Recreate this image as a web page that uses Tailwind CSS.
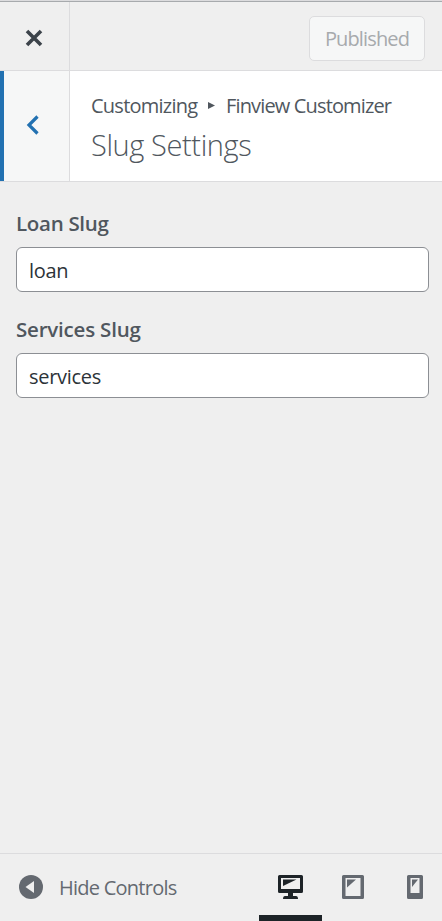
<!DOCTYPE html>
<html lang="en">
<head>
<meta charset="utf-8">
<title>Customize: Slug Settings</title>
<script src="https://cdn.jsdelivr.net/npm/@tailwindcss/browser@4"></script>
</head>
<body class="h-[921px] w-[442px] overflow-hidden bg-[#efefef] font-['Open_Sans','Noto_Sans',sans-serif] text-[20px] text-[#50575e]">
<div class="flex h-full flex-col">
  <header class="flex h-[71px] shrink-0 border-b border-[#dcdcde]">
    <div class="flex w-full border-t border-[#dcdcde]">
      <div class="flex w-full border-t border-[#a7aaad]">
        <button class="flex w-[70px] items-center justify-center border-r border-[#dcdcde] pt-[3px] pr-px" aria-label="Close">
          <svg class="h-[18px] w-[18px]" viewBox="0 0 18 18" fill="none" stroke="#3c434a" stroke-width="3.6"><path d="M2 2L16 16M16 2L2 16"/></svg>
        </button>
        <div class="flex flex-1 items-start justify-end pt-[14px] pr-[17px]">
          <button class="flex h-[45px] w-[116px] items-center justify-center rounded-[5px] border border-[#dcdcde] bg-[#f6f7f7] whitespace-nowrap text-[#a7aaad]"><span class="tracking-[-0.85px]">Published</span></button>
        </div>
      </div>
    </div>
  </header>
  <section class="flex h-[111px] shrink-0 border-b border-[#dcdcde] bg-white">
    <button class="flex w-[70px] items-center justify-center border-r border-l-4 border-r-[#dcdcde] border-l-[#2271b1] bg-[#f6f7f7] pr-[8px] pb-[2px]" aria-label="Back">
      <svg class="h-[20px] w-[13px]" viewBox="0 0 13 20" fill="none" stroke="#2271b1" stroke-width="3.2"><path d="M11.5 1.5L3 10L11.5 18.5"/></svg>
    </button>
    <div class="flex flex-col pt-[20px] pl-[21px] whitespace-nowrap">
      <div class="flex h-[28px] items-center">
        <span class="w-[117px] pt-px tracking-[-0.75px]">Customizing</span>
        <svg class="mr-[11px] h-[7px] w-[7px]" viewBox="0 0 7 7" fill="#50575e"><path d="M0 0L7 3.5L0 7Z"/></svg>
        <span class="pt-px tracking-[-0.85px]">Finview Customizer</span>
      </div>
      <h1 class="h-[50px] text-[29px] leading-[52px] font-light tracking-[-0.4px]">Slug Settings</h1>
    </div>
  </section>
  <main class="flex flex-1 flex-col pt-[27px] pr-[13px] pl-4">
    <label class="h-[38px] text-[20.5px] leading-[29px] font-semibold" for="loan"><span class="tracking-[-0.3px]">Loan Slug</span></label>
    <input id="loan" class="h-[45px] shrink-0 rounded-[6px] border border-[#8c8f94] bg-white px-3 pt-[2px] tracking-[-0.3px] text-[#2c3338]" value="loan">
    <label class="mt-[23px] h-[38px] text-[20.5px] leading-[29px] font-semibold" for="services"><span class="tracking-[-0.2px]">Services Slug</span></label>
    <input id="services" class="h-[45px] shrink-0 rounded-[6px] border border-[#8c8f94] bg-white px-3 pt-[2px] tracking-[-0.3px] text-[#2c3338]" value="services">
  </main>
  <footer class="flex h-[68px] shrink-0 border-t border-[#dcdcde] text-[#646970]">
    <button class="flex h-[67px] w-[259px] items-center pl-[19px] whitespace-nowrap">
      <svg class="mr-4 mb-[2px] h-6 w-6" viewBox="0 0 24 24"><circle cx="12" cy="12" r="12" fill="#646970"/><path d="M6.5 12L15 6V18Z" fill="#efefef"/></svg>
      <span class="pt-px tracking-[-0.75px]">Hide Controls</span>
    </button>
    <button class="flex h-[67px] w-[63px] items-center justify-center border-b-[6px] border-[#1d2327] pt-[4px]" aria-label="Desktop">
      <svg class="h-6 w-[25px]" viewBox="0 0 25 24" fill="#1d2327"><path fill-rule="evenodd" d="M1.5 0H23.5Q25 0 25 1.5V16.5Q25 18 23.5 18H15V21H18Q20 21 20 24H5Q5 21 7 21H10V18H1.5Q0 18 0 16.5V1.5Q0 0 1.5 0ZM3 3V14H22V3Z"/><path d="M5 4.5H18.5L5 11Z"/></svg>
    </button>
    <button class="flex h-[67px] w-[62px] items-center justify-center pb-[2px]" aria-label="Tablet">
      <svg class="h-6 w-[22px]" viewBox="0 0 22 24" fill="#646970"><path fill-rule="evenodd" d="M1.5 0H20.5Q22 0 22 1.5V22.5Q22 24 20.5 24H1.5Q0 24 0 22.5V1.5Q0 0 1.5 0ZM3.5 3V21H18.5V3Z"/><path d="M5 4.5H14L5 12.5Z"/></svg>
    </button>
    <button class="flex h-[67px] w-[58px] items-center pb-[2px] pl-[23px]" aria-label="Mobile">
      <svg class="h-6 w-4" viewBox="0 0 16 24" fill="#646970"><path fill-rule="evenodd" d="M1.5 0H14.5Q16 0 16 1.5V22.5Q16 24 14.5 24H1.5Q0 24 0 22.5V1.5Q0 0 1.5 0ZM3.5 3V18H12.5V3Z"/><path d="M5 4.5H11L5 12Z"/></svg>
    </button>
  </footer>
</div>
</body>
</html>
